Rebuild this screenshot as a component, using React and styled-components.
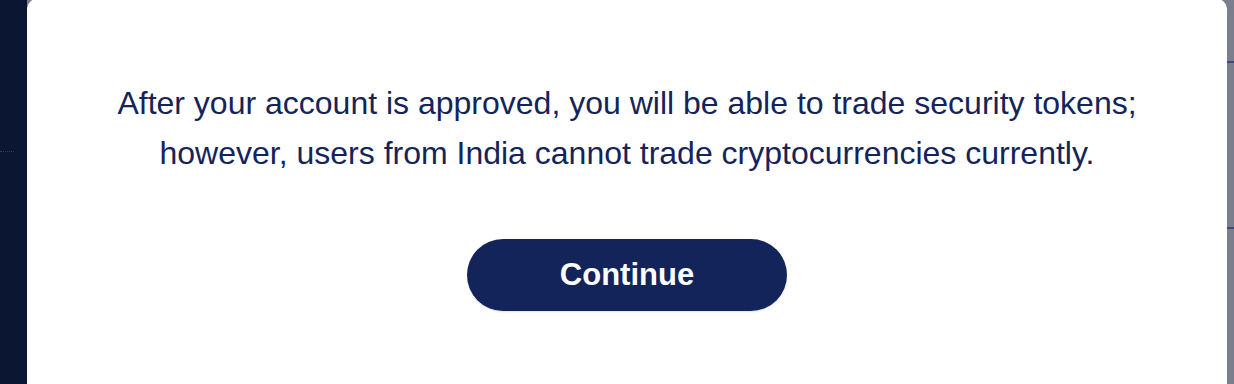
import React from "react";
import styled, { createGlobalStyle } from "styled-components";

const GlobalStyle = createGlobalStyle`
  html, body {
    margin: 0;
    padding: 0;
    background: #7b7e8c;
  }
  * { box-sizing: border-box; }
`;

const Page = styled.div`
  display: flex;
  height: 384px;
  overflow: hidden;
  font-family: "Liberation Sans", Arial, sans-serif;
`;

const Sidebar = styled.div`
  width: 27px;
  flex-shrink: 0;
  background: #0b1633;
  display: flex;
  flex-direction: column;
`;

const SidebarRow = styled.div`
  height: ${(p) => p.h}px;
  width: 14px;
  border-bottom: ${(p) => (p.line ? "1px dotted #2b3a6b" : "none")};
`;

const Backdrop = styled.div`
  flex: 1;
  background: #7b7e8c;
  display: flex;
  flex-direction: column;
`;

const BackdropRow = styled.div`
  height: ${(p) => p.h}px;
  border-bottom: 2px solid #3e4a7b;
`;

const Modal = styled.div`
  width: 1200px;
  flex-shrink: 0;
  margin-top: -2px;
  height: 400px;
  background: #ffffff;
  border-radius: 12px 12px 0 0;
  display: flex;
  flex-direction: column;
  align-items: center;
  padding-top: 80px;
`;

const Message = styled.p`
  margin: 0;
  font-size: 32px;
  line-height: 50px;
  color: #14245a;
  text-align: center;
`;

const Button = styled.button`
  margin-top: 61px;
  width: 320px;
  height: 72px;
  border: none;
  border-radius: 36px;
  background: #13245a;
  color: #ffffff;
  font-family: "Liberation Sans", Arial, sans-serif;
  font-weight: 700;
  font-size: 31px;
  box-shadow: 0 1px 2px rgba(0, 0, 0, 0.12);
  cursor: pointer;
`;

const App = () => {
  return (
    <React.Fragment>
      <GlobalStyle />
      <Page>
        <Sidebar>
          <SidebarRow h={152} line />
        </Sidebar>
        <Modal>
          <Message>
            After your account is approved, you will be able to trade security tokens;
            <br />
            however, users from India cannot trade cryptocurrencies currently.
          </Message>
          <Button>Continue</Button>
        </Modal>
        <Backdrop>
          <BackdropRow h={63} />
          <BackdropRow h={166} />
        </Backdrop>
      </Page>
    </React.Fragment>
  );
};

export default App;
